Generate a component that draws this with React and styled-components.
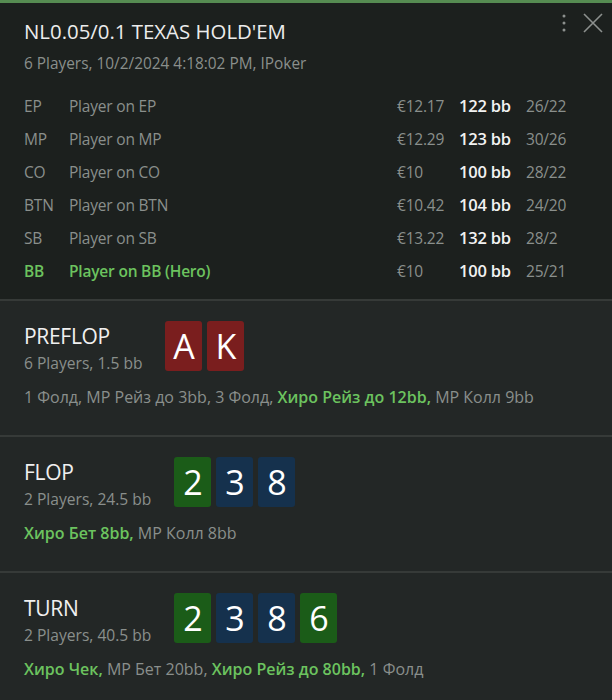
import React from "react";
import styled, { createGlobalStyle } from "styled-components";

const GlobalStyle = createGlobalStyle`
  html, body {
    margin: 0;
    padding: 0;
    background: #232726;
  }
  body {
    font-family: "Open Sans", "Noto Sans", "Liberation Sans", sans-serif;
    -webkit-font-smoothing: antialiased;
  }
`;

const Panel = styled.div`
  width: 612px;
  height: 700px;
  overflow: hidden;
  display: flex;
  flex-direction: column;
  background: #232726;
`;

const Header = styled.header`
  background: #1c201e;
  border-top: 3px solid #568c52;
  border-bottom: 2px solid #363a38;
  padding: 14px 24px 12px;
`;

const TitleRow = styled.div`
  display: flex;
  justify-content: space-between;
  align-items: flex-start;
`;

const Title = styled.h1`
  margin: 0;
  font-size: 20.4px;
  line-height: 28px;
  font-weight: 400;
  color: #ececec;
`;

const Tools = styled.div`
  display: flex;
  align-items: center;
  gap: 16px;
  margin-top: -4px;
  margin-right: -15px;
  color: #8c908e;
`;

const Subtitle = styled.div`
  margin-top: 8px;
  font-size: 15.4px;
  line-height: 22px;
  color: #8a8f8c;
`;

const Players = styled.div`
  margin-top: 14px;
  display: grid;
  grid-template-columns: 45px 1fr 62px 67px 62px;
  grid-auto-rows: 33px;
  align-items: center;
  font-size: 15.5px;
  letter-spacing: -0.2px;
`;

const Cell = styled.div`
  color: ${(p) => (p.$hero ? "#6cc35f" : p.$bright ? "#f2f2f2" : "#8a8f8c")};
  font-weight: ${(p) => (p.$hero || p.$bright ? 600 : 400)};
  font-size: ${(p) => (p.$bright ? "16.5px" : "inherit")};
  white-space: nowrap;
`;

const Street = styled.section`
  padding: 20px 24px 26px;
  border-bottom: ${(p) => (p.$last ? "none" : "2px solid #363a38")};
`;

const StreetTop = styled.div`
  display: flex;
  align-items: flex-start;
  gap: 23px;
`;

const StreetInfo = styled.div`
  display: flex;
  flex-direction: column;
`;

const StreetName = styled.div`
  font-size: 21px;
  line-height: 31px;
  color: #f0f0f0;
  letter-spacing: -0.3px;
`;

const StreetMeta = styled.div`
  font-size: 15.6px;
  line-height: 22px;
  color: #8a8f8c;
`;

const Cards = styled.div`
  display: flex;
  gap: 5px;
`;

const Card = styled.div`
  width: 37px;
  height: 50px;
  border-radius: 3px;
  background: ${(p) => p.$bg};
  color: #ffffff;
  display: flex;
  align-items: center;
  justify-content: center;
  font-size: 34px;
  line-height: 1;
`;

const Actions = styled.div`
  margin-top: 11px;
  font-size: 16px;
  line-height: 24px;
  color: #8a8f8c;
  white-space: nowrap;
`;

const Act = styled.span`
  color: ${(p) => (p.$hero ? "#6cc35f" : "inherit")};
  font-weight: ${(p) => (p.$hero ? 600 : 400)};
`;

const SUIT = {
  h: "#7a1e1e",
  c: "#1b5c18",
  s: "#15314d",
};

const players = [
  ["EP", "Player on EP", "€12.17", "122 bb", "26/22"],
  ["MP", "Player on MP", "€12.29", "123 bb", "30/26"],
  ["CO", "Player on CO", "€10", "100 bb", "28/22"],
  ["BTN", "Player on BTN", "€10.42", "104 bb", "24/20"],
  ["SB", "Player on SB", "€13.22", "132 bb", "28/2"],
  ["BB", "Player on BB (Hero)", "€10", "100 bb", "25/21", true],
];

const streets = [
  {
    name: "PREFLOP",
    meta: "6 Players, 1.5 bb",
    cards: [["A", "h"], ["K", "h"]],
    actions: [
      ["1 Фолд, MP Рейз до 3bb, 3 Фолд, "],
      ["Хиро Рейз до 12bb,", true],
      [" MP Колл 9bb"],
    ],
  },
  {
    name: "FLOP",
    meta: "2 Players, 24.5 bb",
    cards: [["2", "c"], ["3", "s"], ["8", "s"]],
    actions: [["Хиро Бет 8bb,", true], [" MP Колл 8bb"]],
  },
  {
    name: "TURN",
    meta: "2 Players, 40.5 bb",
    cards: [["2", "c"], ["3", "s"], ["8", "s"], ["6", "c"]],
    actions: [
      ["Хиро Чек,", true],
      [" MP Бет 20bb, "],
      ["Хиро Рейз до 80bb,", true],
      [" 1 Фолд"],
    ],
  },
];

const KebabIcon = () => (
  <svg width="6" height="20" viewBox="0 0 6 20" fill="currentColor">
    <circle cx="3" cy="3" r="1.5" />
    <circle cx="3" cy="10" r="1.5" />
    <circle cx="3" cy="17" r="1.5" />
  </svg>
);

const CloseIcon = () => (
  <svg width="20" height="20" viewBox="0 0 20 20" stroke="currentColor" strokeWidth="1.6" fill="none">
    <path d="M1 1 L19 19 M19 1 L1 19" />
  </svg>
);

export default function App() {
  return (
    <Panel>
      <GlobalStyle />
      <Header>
        <TitleRow>
          <Title>NL0.05/0.1 TEXAS HOLD'EM</Title>
          <Tools>
            <KebabIcon />
            <CloseIcon />
          </Tools>
        </TitleRow>
        <Subtitle>6 Players, 10/2/2024 4:18:02 PM, IPoker</Subtitle>
        <Players>
          {players.map(([pos, name, money, bb, stats, hero]) => (
            <React.Fragment key={pos}>
              <Cell $hero={hero}>{pos}</Cell>
              <Cell $hero={hero}>{name}</Cell>
              <Cell>{money}</Cell>
              <Cell $bright>{bb}</Cell>
              <Cell>{stats}</Cell>
            </React.Fragment>
          ))}
        </Players>
      </Header>
      {streets.map((s, i) => (
        <Street key={s.name} $last={i === streets.length - 1}>
          <StreetTop>
            <StreetInfo>
              <StreetName>{s.name}</StreetName>
              <StreetMeta>{s.meta}</StreetMeta>
            </StreetInfo>
            <Cards>
              {s.cards.map(([rank, suit], j) => (
                <Card key={j} $bg={SUIT[suit]}>
                  {rank}
                </Card>
              ))}
            </Cards>
          </StreetTop>
          <Actions>
            {s.actions.map(([text, hero], j) => (
              <Act key={j} $hero={hero}>
                {text}
              </Act>
            ))}
          </Actions>
        </Street>
      ))}
    </Panel>
  );
}
